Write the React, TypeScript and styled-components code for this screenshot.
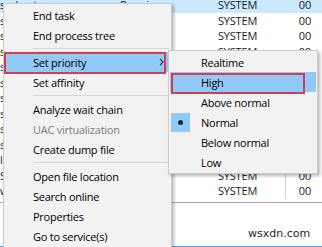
import React from "react";
import styled, { createGlobalStyle } from "styled-components";

const GlobalStyle = createGlobalStyle`
  html, body {
    margin: 0;
    padding: 0;
    background: #ffffff;
    overflow: hidden;
  }
  body {
    font-family: "Open Sans", "Noto Sans", sans-serif;
  }
`;

const Screen = styled.div`
  position: relative;
  width: 322px;
  height: 247px;
  overflow: hidden;
  display: flex;
  flex-direction: column;
  background: #ffffff;
`;

const ProcessTable = styled.div`
  margin-top: -3px;
  display: flex;
  flex-direction: column;
`;

const Row = styled.div<{ selected?: boolean }>`
  display: grid;
  grid-template-columns: 120px 98px 68px 36px;
  height: 15.5px;
  align-items: center;
  font-size: 11px;
  letter-spacing: -0.2px;
  color: #1a1a1a;
  background: ${(p) => (p.selected ? "#cce8ff" : "transparent")};
`;

const Cell = styled.div<{ right?: boolean; divider?: boolean }>`
  height: 100%;
  display: flex;
  align-items: center;
  justify-content: ${(p) => (p.right ? "flex-end" : "flex-start")};
  padding-right: ${(p) => (p.right ? "11px" : "0")};
  border-right: ${(p) => (p.divider ? "1px solid #d0d0d0" : "none")};
  white-space: nowrap;
  overflow: hidden;
`;

const LowerPane = styled.div`
  flex: 1;
  border-top: 1px solid #a9a9a9;
  border-bottom: 1px solid #5a9ad8;
  margin-top: 3px;
`;

const Menu = styled.div<{ left: number; top: number; width: number }>`
  position: absolute;
  left: ${(p) => p.left}px;
  top: ${(p) => p.top}px;
  width: ${(p) => p.width}px;
  box-sizing: border-box;
  background: #f2f2f2;
  border: 1px solid #cccccc;
  padding: 1px;
  box-shadow: 2px 2px 3px rgba(0, 0, 0, 0.28);
  font-size: 11px;
  letter-spacing: -0.25px;
  color: #000000;
`;

const MainMenu = styled(Menu)`
  padding: 1px 0;
`;

const Item = styled.div<{ active?: boolean; disabled?: boolean }>`
  display: flex;
  align-items: center;
  height: 20px;
  background: ${(p) => (p.active ? "#91c9f7" : "transparent")};
  color: ${(p) => (p.disabled ? "#7d7d7d" : "#000000")};
  white-space: nowrap;
`;

const Gutter = styled.div<{ width: number }>`
  width: ${(p) => p.width}px;
  height: 100%;
  flex: none;
  display: flex;
  align-items: center;
`;

const BulletBox = styled.div`
  margin-left: 1px;
  width: 19px;
  height: 19px;
  background: #91c9f7;
  display: flex;
  align-items: center;
  justify-content: center;
`;

const Dot = styled.div`
  width: 5px;
  height: 5px;
  border-radius: 50%;
  background: #1c2733;
`;

const Chevron = styled.svg`
  margin-left: auto;
  margin-right: 7px;
`;

const Separator = styled.div`
  height: 7px;
  display: flex;
  align-items: center;
  padding-left: 29px;
  padding-right: 2px;
  &::after {
    content: "";
    flex: 1;
    height: 1px;
    background: #d7d7d7;
  }
`;

const Annotation = styled.div<{ left: number; top: number; width: number; height: number }>`
  position: absolute;
  left: ${(p) => p.left}px;
  top: ${(p) => p.top}px;
  width: ${(p) => p.width}px;
  height: ${(p) => p.height}px;
  box-sizing: border-box;
  border: 2px solid #d43d4f;
`;

const Watermark = styled.div`
  position: absolute;
  left: 248px;
  top: 227px;
  font-family: "DejaVu Sans", sans-serif;
  font-size: 11px;
  color: #1e1e1e;
`;

const rows = [
  { name: "svchost.exe", pid: "1044", status: "Running" },
  { name: "svchost.exe", pid: "1088", status: "Running" },
  { name: "svchost.exe", pid: "1152", status: "Running" },
  { name: "svchost.exe", pid: "1236", status: "Running" },
  { name: "svchost.exe", pid: "1320", status: "Running" },
  { name: "spoolsv.exe", pid: "1468", status: "Running" },
  { name: "svchost.exe", pid: "1512", status: "Running" },
  { name: "svchost.exe", pid: "1600", status: "Running" },
  { name: "services.exe", pid: "636", status: "Running" },
  { name: "smss.exe", pid: "312", status: "Running" },
  { name: "lsass.exe", pid: "652", status: "Running" },
  { name: "System", pid: "4", status: "Running" },
  { name: "wininit.exe", pid: "520", status: "Running" },
];

type Entry = { label?: string; disabled?: boolean; active?: boolean; arrow?: boolean; sep?: boolean };

const mainItems: Entry[] = [
  { label: "End task" },
  { label: "End process tree" },
  { sep: true },
  { label: "Set priority", active: true, arrow: true },
  { label: "Set affinity" },
  { sep: true },
  { label: "Analyze wait chain" },
  { label: "UAC virtualization", disabled: true },
  { label: "Create dump file" },
  { sep: true },
  { label: "Open file location" },
  { label: "Search online" },
  { label: "Properties" },
  { label: "Go to service(s)" },
];

const priorities = ["Realtime", "High", "Above normal", "Normal", "Below normal", "Low"];

export default function App() {
  return (
    <>
      <GlobalStyle />
      <Screen>
        <ProcessTable>
          {rows.map((r, i) => (
            <Row key={i} selected={i === 0}>
              <Cell>{r.name}</Cell>
              <Cell>{r.status}</Cell>
              <Cell divider={i >= 11}>SYSTEM</Cell>
              <Cell right>00</Cell>
            </Row>
          ))}
        </ProcessTable>
        <LowerPane />

        <MainMenu left={3} top={3} width={169}>
          {mainItems.map((m, i) =>
            m.sep ? (
              <Separator key={i} />
            ) : (
              <Item key={i} active={m.active} disabled={m.disabled}>
                <Gutter width={29} />
                {m.label}
                {m.arrow && (
                  <Chevron width="5" height="8" viewBox="0 0 5 8">
                    <path d="M1 0.8 L4 4 L1 7.2" fill="none" stroke="#2b2b2b" strokeWidth="1.1" />
                  </Chevron>
                )}
              </Item>
            )
          )}
        </MainMenu>

        <Menu left={168} top={50} width={150}>
          {priorities.map((p) => (
            <Item key={p} active={p === "High"}>
              <Gutter width={31}>
                {p === "Normal" && (
                  <BulletBox>
                    <Dot />
                  </BulletBox>
                )}
              </Gutter>
              {p}
            </Item>
          ))}
        </Menu>

        <Annotation left={4} top={52} width={162} height={22} />
        <Annotation left={171} top={73} width={134} height={21} />
        <Watermark>wsxdn.com</Watermark>
      </Screen>
    </>
  );
}
